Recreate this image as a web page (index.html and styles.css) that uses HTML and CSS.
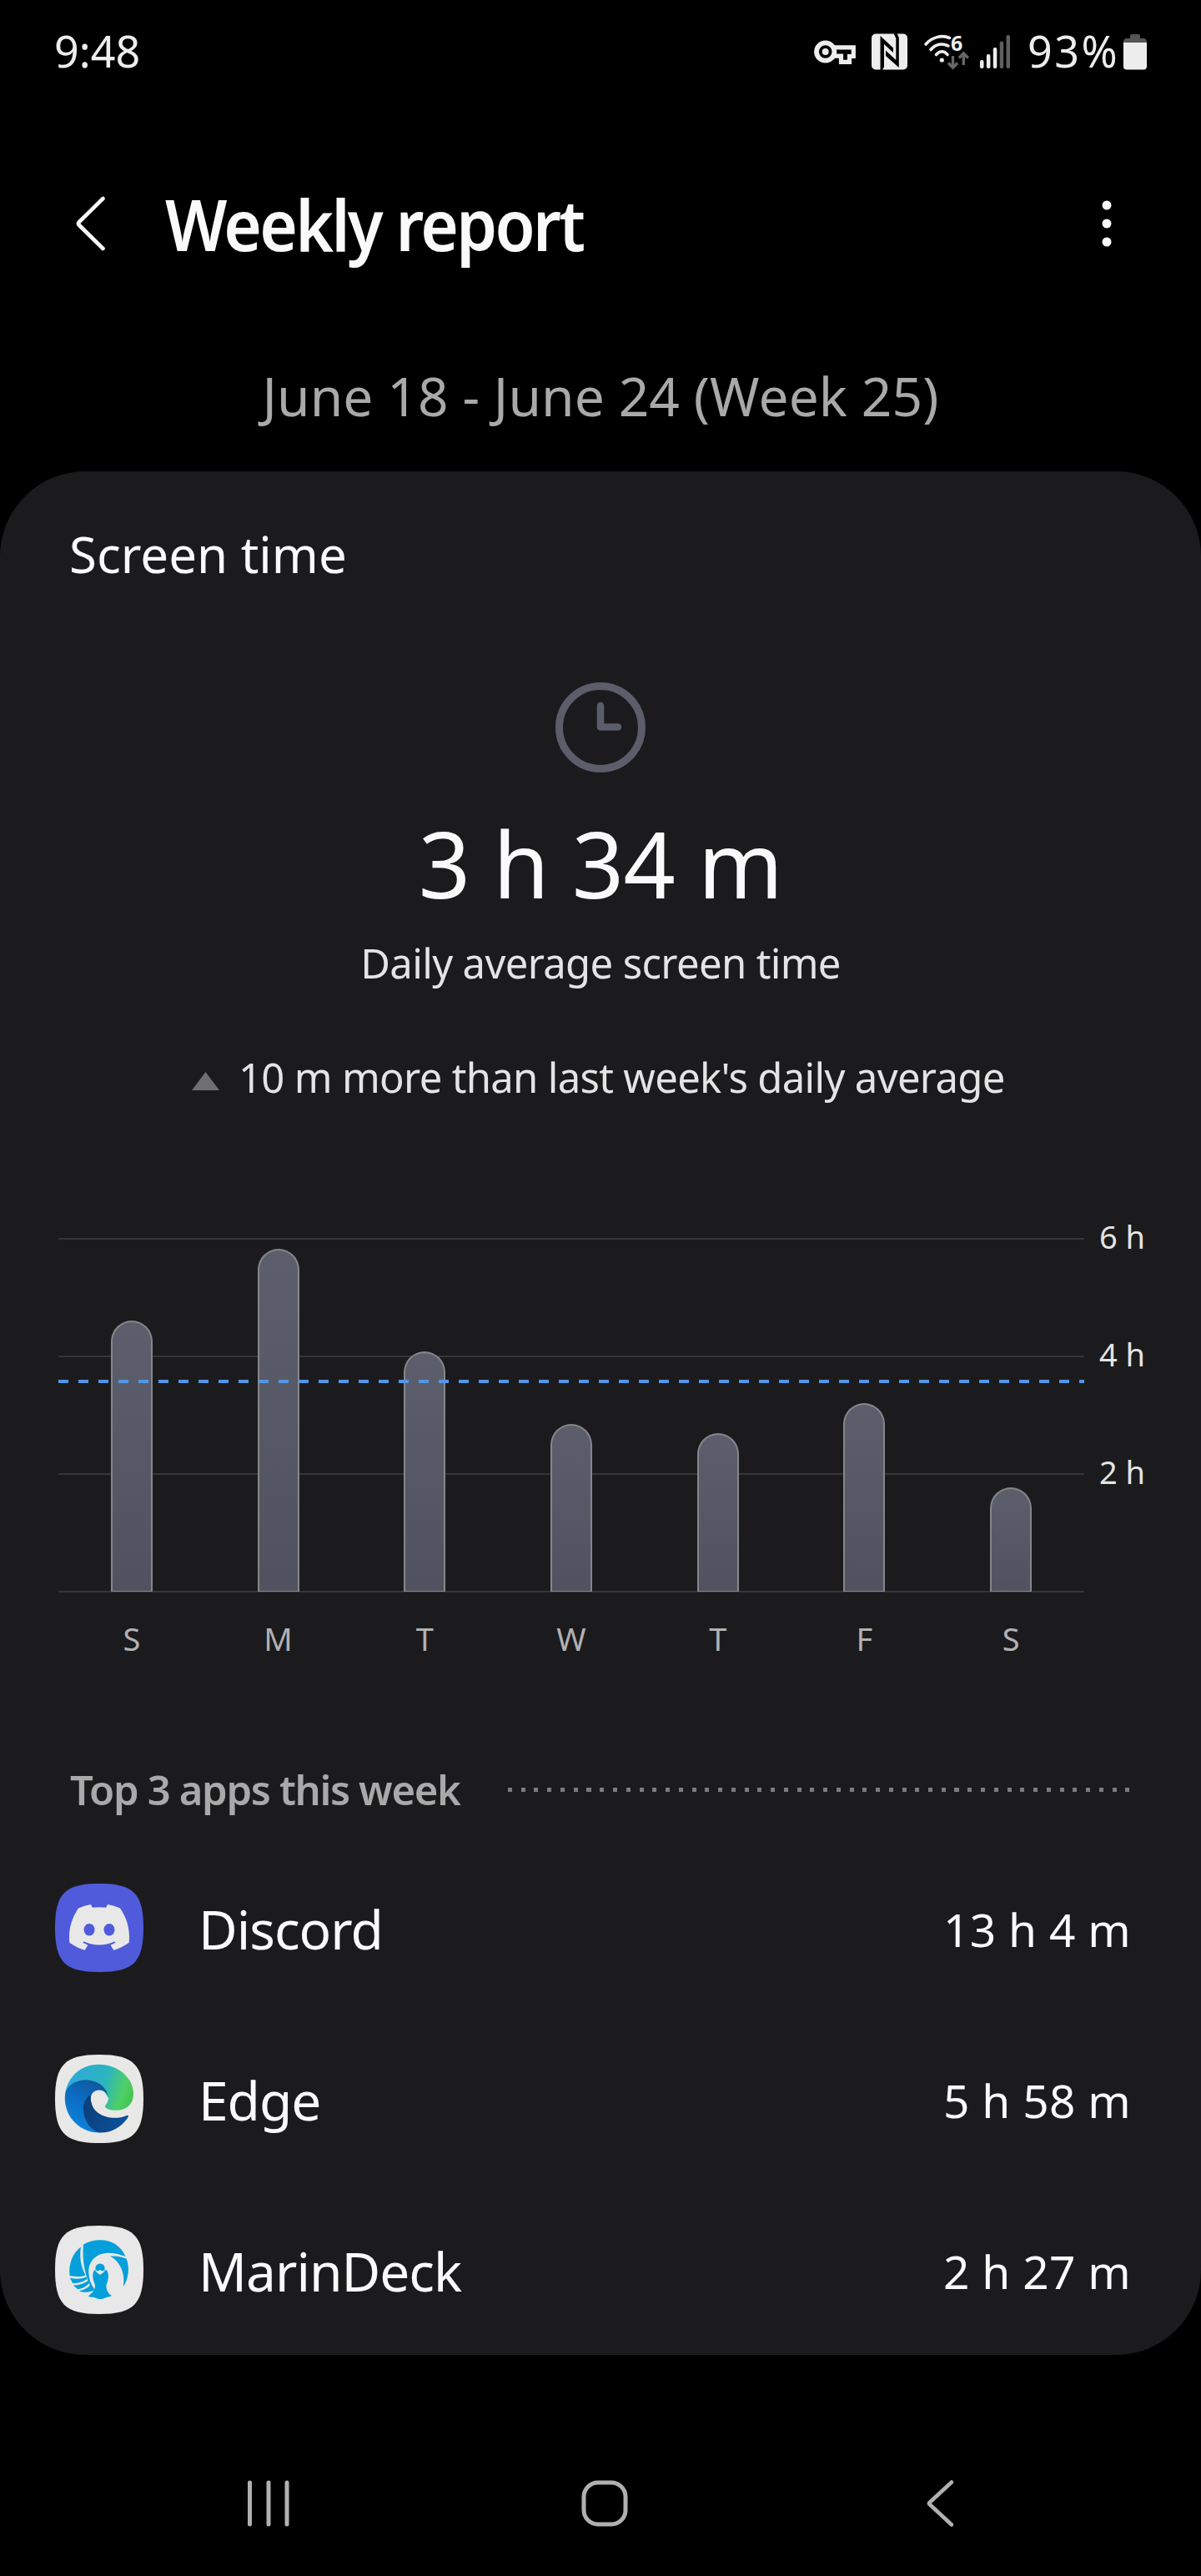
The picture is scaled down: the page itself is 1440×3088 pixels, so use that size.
FILE: index.html
```html
<!DOCTYPE html>
<html lang="en">
<head>
  <meta charset="UTF-8" />
  <meta name="viewport" content="width=device-width, initial-scale=1.0"/>
  <title>Weekly report</title>
  <link rel="stylesheet" href="styles.css">
</head>
<body>

  <div class="status-bar">
    <span class="clock-text">9:48</span>
    <div class="status-icons">
      <svg class="icon-key" width="50" height="44" viewBox="0 0 50 44">
        <circle cx="13.700" cy="22" r="10.700" fill="none" stroke="#ededed" stroke-width="5.800"/>
        <circle cx="13.700" cy="22" r="4" fill="#ededed"/>
        <path d="M24 16.800H47.300V27.500H42.500V34.300H32.500V27.200H24" fill="none" stroke="#ededed" stroke-width="5.200"/>
      </svg>
      <svg class="icon-nfc" width="43" height="44" viewBox="0 0 43 44">
        <rect y="0.500" width="43" height="43" rx="5" fill="#ededed"/>
        <path d="M10.500 3L26 17.500V23L15 13V40L13 44H10.500Z" fill="#000"/>
        <path d="M32.800 41L17 27V20.500L29.300 32V6L26.500 0H30.500L32.800 5Z" fill="#000"/>
      </svg>
      <svg class="icon-wifi" width="54" height="44" viewBox="0 0 54 44">
        <g fill="none" stroke="#ededed" stroke-width="3.600" stroke-linecap="round">
          <path d="M2 13C10 4 22 1.500 30.500 5.500"/>
          <path d="M8 19.500C14 12.500 22 11.500 29 15"/>
          <path d="M14.500 25.500C19 20.500 24 20.500 28 25.500"/>
        </g>
        <circle cx="21.300" cy="32" r="2.600" fill="#ededed"/>
        <text x="32" y="20.500" class="wifi-gen">6</text>
        <g fill="none" stroke="#666" stroke-width="3.400">
          <path d="M34.500 27V41M29 35.500L34.500 41L40 35.500"/>
          <path d="M47.300 38V24M41.800 29.500L47.300 24L52.800 29.500"/>
        </g>
      </svg>
      <svg class="icon-signal" width="36" height="44" viewBox="0 0 36 44">
        <g fill="#ededed">
          <rect x="0" y="32" width="4.500" height="10" rx="2"/>
          <rect x="7.900" y="25" width="4.500" height="17" rx="2"/>
          <rect x="15.800" y="17" width="4.500" height="25" rx="2"/>
        </g>
        <g fill="#5f5f5f">
          <rect x="23.700" y="9.500" width="4.500" height="32.500" rx="2"/>
          <rect x="31.500" y="2" width="4.500" height="40" rx="2"/>
        </g>
      </svg>
      <span class="battery-text">93%</span>
      <svg class="icon-battery" width="28" height="44" viewBox="0 0 28 44">
        <path d="M8 6V3Q8 1 10 1H18Q20 1 20 3V6H24Q28 6 28 11H0Q0 6 4 6Z" fill="#555"/>
        <path d="M0 11H28V39.500Q28 43.500 24 43.500H4Q0 43.500 0 39.500Z" fill="#ededed"/>
      </svg>
    </div>
  </div>

  <header class="app-bar">
    <svg class="back-arrow" width="42" height="70" viewBox="0 0 42 70">
      <path d="M34.500 5L6 33Q4 35 6 37L34.500 65" fill="none" stroke="#fafafa" stroke-width="4.600" stroke-linecap="round"/>
    </svg>
    <h1>Weekly report</h1>
    <svg class="more-dots" width="12" height="56" viewBox="0 0 12 56">
      <circle cx="6" cy="6" r="5.500"/>
      <circle cx="6" cy="28" r="5.500"/>
      <circle cx="6" cy="50" r="5.500"/>
    </svg>
  </header>

  <div class="date-range">June 18 - June 24 (Week 25)</div>

  <main class="card">
    <h2>Screen time</h2>

    <div class="summary">
      <svg width="108" height="108" viewBox="0 0 108 108">
        <circle cx="54" cy="54" r="49.500" fill="none" stroke="#5b5e6a" stroke-width="9"/>
        <path d="M54 28V53.500H75" fill="none" stroke="#5b5e6a" stroke-width="8.500" stroke-linecap="round" stroke-linejoin="round"/>
      </svg>
      <div class="total">3 h 34 m</div>
      <div class="total-label">Daily average screen time</div>
    </div>

    <div class="compare">
      <svg width="33" height="22" viewBox="0 0 33 22"><path d="M16.500 0L33 22H0Z" fill="#6f6f70"/></svg>
      <span>10 m more than last week's daily average</span>
    </div>

    <div class="chart">
      <div>
        <div class="plot">
          <div class="col"><div class="bar" style="height: 325px"></div></div>
          <div class="col"><div class="bar" style="height: 411px"></div></div>
          <div class="col"><div class="bar" style="height: 288px"></div></div>
          <div class="col"><div class="bar" style="height: 201px"></div></div>
          <div class="col"><div class="bar" style="height: 190px"></div></div>
          <div class="col"><div class="bar" style="height: 226px"></div></div>
          <div class="col"><div class="bar" style="height: 125px"></div></div>
          <div class="average-line"></div>
        </div>
        <div class="days">
          <span>S</span><span>M</span><span>T</span><span>W</span><span>T</span><span>F</span><span>S</span>
        </div>
      </div>
      <div class="hours">
        <span>6 h</span>
        <span>4 h</span>
        <span>2 h</span>
      </div>
    </div>

    <div class="section-title">
      <h3>Top 3 apps this week</h3>
      <div class="dots"></div>
    </div>

    <div class="app">
      <svg class="app-icon" viewBox="0 0 106 106">
        <path d="M0 53C0 12 12 0 53 0S106 12 106 53S94 106 53 106S0 94 0 53Z" fill="#505bdb"/>
        <path transform="translate(17 16.400) scale(3)" fill="#e8e8e8" d="M20.317 4.3698a19.7913 19.7913 0 00-4.8851-1.5152.0741.0741 0 00-.0785.0371c-.211.3753-.4447.8648-.6083 1.2495-1.8447-.2762-3.68-.2762-5.4868 0-.1636-.3933-.4058-.8742-.6177-1.2495a.077.077 0 00-.0785-.037 19.7363 19.7363 0 00-4.8852 1.515.0699.0699 0 00-.0321.0277C.5334 9.0458-.319 13.5799.0992 18.0578a.0824.0824 0 00.0312.0561c2.0528 1.5076 4.0413 2.4228 5.9929 3.0294a.0777.0777 0 00.0842-.0276c.4616-.6304.8731-1.2952 1.226-1.9942a.076.076 0 00-.0416-.1057c-.6528-.2476-1.2743-.5495-1.8722-.8923a.077.077 0 01-.0076-.1277c.1258-.0943.2517-.1923.3718-.2914a.0743.0743 0 01.0776-.0105c3.9278 1.7933 8.18 1.7933 12.0614 0a.0739.0739 0 01.0785.0095c.1202.099.246.1981.3728.2924a.077.077 0 01-.0066.1276 12.2986 12.2986 0 01-1.873.8914.0766.0766 0 00-.0407.1067c.3604.698.7719 1.3628 1.225 1.9932a.076.076 0 00.0842.0286c1.961-.6067 3.9495-1.5219 6.0023-3.0294a.077.077 0 00.0313-.0552c.5004-5.177-.8382-9.6739-3.5485-13.6604a.061.061 0 00-.0312-.0286zM8.02 15.3312c-1.1825 0-2.1569-1.0857-2.1569-2.419 0-1.3332.9555-2.4189 2.157-2.4189 1.2108 0 2.1757 1.0952 2.1568 2.419 0 1.3332-.9555 2.4189-2.1569 2.4189zm7.9748 0c-1.1825 0-2.1569-1.0857-2.1569-2.419 0-1.3332.9554-2.4189 2.1569-2.4189 1.2108 0 2.1757 1.0952 2.1568 2.419 0 1.3332-.946 2.4189-2.1568 2.4189Z"/>
      </svg>
      <span class="app-name">Discord</span>
      <span class="app-time">13 h 4 m</span>
    </div>

    <div class="app">
      <svg class="app-icon" viewBox="0 0 106 106">
        <defs>
          <linearGradient id="edge-top" x1="0" y1="0.400" x2="1" y2="0.600">
            <stop offset="0" stop-color="#2fa9dc"/>
            <stop offset="0.550" stop-color="#2bb5c0"/>
            <stop offset="0.850" stop-color="#4fcf66"/>
            <stop offset="1" stop-color="#45c455"/>
          </linearGradient>
          <linearGradient id="edge-mid" x1="0.700" y1="0" x2="0.300" y2="1">
            <stop offset="0" stop-color="#10569c"/>
            <stop offset="0.400" stop-color="#0a6bc0"/>
            <stop offset="1" stop-color="#0d86dc"/>
          </linearGradient>
          <linearGradient id="edge-low" x1="0" y1="0.300" x2="1" y2="0.700">
            <stop offset="0" stop-color="#0b3f7c"/>
            <stop offset="1" stop-color="#0d509c"/>
          </linearGradient>
        </defs>
        <path d="M0 53C0 12 12 0 53 0S106 12 106 53S94 106 53 106S0 94 0 53Z" fill="#e8e8e6"/>
        <path d="M12 49C14 27 31 11.800 52 11.800C77 11.800 94 29 94 47C94 59 86 66.800 73 66.800C65 66.800 60 64.500 60 62C60 60 64 58 64 52L55 38L30 36Z" fill="url(#edge-top)"/>
        <path d="M11.800 52C12 38 23 30.500 37 30.500C52 30.500 63 40 64 52C63 46 58.500 42.500 53 42.500C46 42.500 42.500 48 42.500 54L54 93.600C30 94 11.800 75 11.800 52Z" fill="url(#edge-mid)"/>
        <path d="M43 48C36.500 52 34 58 34 64C34 80 43 91 54 93.600C68 94 81 86 87.800 74.500C88.300 73 87.300 72.500 86 73C68 80.500 43.500 73 42.800 53Z" fill="url(#edge-low)"/>
      </svg>
      <span class="app-name">Edge</span>
      <span class="app-time">5 h 58 m</span>
    </div>

    <div class="app">
      <svg class="app-icon" viewBox="0 0 106 106">
        <path d="M0 53C0 12 12 0 53 0S106 12 106 53S94 106 53 106S0 94 0 53Z" fill="#e8e8e8"/>
        <g fill="#059fdb">
          <path d="M34 22.500C46 15.500 62 15.500 72 22C78 26 82 31 84.500 37C72 32 62 31.500 54 34.500C44 38.500 39 48 40.500 58C41 66 44 72 47.500 76L43 74C37 62 32 44 34 22.500Z"/>
          <path d="M31 25.500C21 33 16 46 17.500 60C25 61.500 31 61.500 36.500 59.500C31 49 29 38 31 25.500Z"/>
          <path d="M18 62.500C25 64.500 31 64 37.500 61.500L38.500 64C33 68 26 69.500 21 69Z"/>
          <path d="M22 71.500C29 71.500 35 69.500 39.500 66L41 69C37 73.500 32 76 27 76.200Z"/>
          <path d="M29 78.200C34 77.500 39 75 42.500 71L47.500 77C42 80 34 81 29 78.200Z"/>
          <path d="M66 36.500C73 36 79 37 85.500 39.500C90 50 88 64 82 73C84 57 79 44 66 36.500Z"/>
          <circle cx="54" cy="51" r="5.600"/>
          <path d="M47.500 53C44 57 45 64 48 71C48.500 77 44 81 40 84.500C43 87 46 84.500 49 87C53 88.500 56 88.500 60 86.500C63 85 65 86 68 84C64 82 61 77 61.500 71C64.500 64 65 57 61.500 53Z"/>
        </g>
        <path d="M47.500 53L51.500 54.500L54 53L56.500 54.500L61 53L57.500 56.500L54 59L50.500 56.500Z" fill="#e8e8e8"/>
      </svg>
      <span class="app-name">MarinDeck</span>
      <span class="app-time">2 h 27 m</span>
    </div>
  </main>

  <nav class="nav-bar">
    <svg width="56" height="56" viewBox="0 0 56 56">
      <path d="M5.500 3V53M28 3V53M50 3V53" fill="none" stroke="#b0b0b0" stroke-width="5" stroke-linecap="round"/>
    </svg>
    <svg width="56" height="56" viewBox="0 0 56 56">
      <rect x="3" y="3" width="50" height="50" rx="17" fill="none" stroke="#b0b0b0" stroke-width="5"/>
    </svg>
    <svg width="56" height="58" viewBox="0 0 56 58">
      <path d="M42 3.500L15.500 28Q14.500 29 15.500 30L42 54.500" fill="none" stroke="#b0b0b0" stroke-width="4.600" stroke-linecap="round"/>
    </svg>
  </nav>

</body>
</html>
```
FILE: styles.css
```css
:root {
  --card-bg: #1b1b1d;
  --grid: #363638;
  --text-dim: #a9a9a9;
}

* {
  box-sizing: border-box;
}

body {
  margin: 0;
  background: #000;
  color: #fafafa;
  font-family: "Noto Sans", sans-serif;
}

h1, h2, h3 {
  margin: 0;
  font-weight: 400;
}

svg {
  display: block;
  flex-shrink: 0;
  overflow: visible;
}

.status-bar {
  height: 123px;
  padding: 0 65px;
  display: flex;
  justify-content: space-between;
  align-items: center;
  font-size: 52px;
  line-height: 60px;
  color: #ededed;
}

.clock-text, .battery-text {
  padding-bottom: 1px;
}

.status-icons {
  display: flex;
  align-items: center;
}

.icon-nfc {
  margin-left: 19px;
}

.icon-wifi {
  margin-left: 20px;
}

.icon-signal {
  margin-left: 13px;
}

.battery-text {
  width: 115px;
  margin-left: 21px;
  letter-spacing: 2.5px;
}

.wifi-gen {
  font-size: 25px;
  font-weight: 700;
  fill: #ededed;
}

.app-bar {
  height: 290px;
  padding: 0 107px 0 89px;
  display: flex;
  align-items: center;
}

.app-bar h1 {
  flex: 1;
  margin-left: 67px;
  padding-top: 1px;
  font-size: 84px;
  font-weight: 600;
  line-height: 120px;
  letter-spacing: -2.9px;
  transform: scaleX(0.93);
  transform-origin: left;
}

.more-dots {
  fill: #fafafa;
}

.date-range {
  height: 120px;
  line-height: 124px;
  text-align: center;
  font-size: 64px;
  letter-spacing: 0.1px;
  color: var(--text-dim);
}

.card {
  margin-top: 32px;
  height: 2258px;
  padding-top: 49px;
  border-radius: 102px;
  background: var(--card-bg);
}

.card h2 {
  padding-left: 83px;
  font-size: 60px;
  line-height: 100px;
}

.summary {
  margin-top: 104px;
  display: flex;
  flex-direction: column;
  align-items: center;
}

.total {
  margin-top: 34px;
  font-size: 109px;
  line-height: 150px;
  letter-spacing: -0.6px;
}

.total-label {
  margin-top: 11px;
  font-size: 49px;
  line-height: 66px;
  letter-spacing: -0.65px;
  color: #e4e4e4;
}

.compare {
  margin-top: 71px;
  padding-left: 230px;
  display: flex;
  align-items: center;
  gap: 23px;
  font-size: 49px;
  line-height: 66px;
  letter-spacing: -0.68px;
  color: #e4e4e4;
}

.compare svg {
  margin-top: 9px;
}

.chart {
  margin: 160px 0 0 70px;
  display: flex;
}

.plot {
  position: relative;
  width: 1230px;
  height: 425px;
  padding-bottom: 1px;
  display: flex;
  background: repeating-linear-gradient(var(--grid) 0 2px, transparent 2px 141px);
}

.col {
  flex: 1;
  display: flex;
  align-items: flex-end;
  justify-content: center;
}

.bar {
  width: 50px;
  border: 2px solid #85868b;
  border-bottom-width: 1px;
  border-radius: 25px 25px 0 0;
  background: linear-gradient(#5c5f6b, #50535f);
}

/* drawn over the bars */
.average-line {
  position: absolute;
  top: 170px;
  left: 0;
  width: 100%;
  height: 4px;
  background: repeating-linear-gradient(90deg, #5296e6 0 12px, transparent 12px 24px);
}

.days {
  margin-top: 28px;
  display: flex;
  font-size: 38px;
  line-height: 54px;
  color: #b2b2b2;
}

.days span {
  flex: 1;
  text-align: center;
}

.hours {
  margin: -29px 0 0 18px;
  display: flex;
  flex-direction: column;
  gap: 87px;
  font-size: 38px;
  line-height: 54px;
  color: #e4e4e4;
}

.section-title {
  margin-top: 120px;
  padding: 0 86px 0 84px;
  display: flex;
  align-items: center;
}

.section-title h3 {
  width: 525px;
  font-size: 49px;
  font-weight: 600;
  line-height: 68px;
  letter-spacing: -1.35px;
  color: var(--text-dim);
}

.dots {
  flex: 1;
  height: 5px;
  background: repeating-linear-gradient(90deg, #7c7c7d 0 5px, transparent 5px 15.75px);
}

.section-title + .app {
  margin-top: 29px;
}

.app {
  height: 205px;
  padding: 0 84px 0 66px;
  display: flex;
  align-items: center;
}

.app-icon {
  width: 106px;
  height: 106px;
}

.app-name {
  flex: 1;
  margin-left: 66px;
  padding-top: 3px;
  font-size: 64px;
  letter-spacing: -1px;
}

.app-time {
  padding-top: 3px;
  font-size: 55px;
  letter-spacing: 0.3px;
}

.nav-bar {
  height: 265px;
  padding: 91px 285px 0 294px;
  display: flex;
  align-items: center;
  justify-content: space-between;
}
```
